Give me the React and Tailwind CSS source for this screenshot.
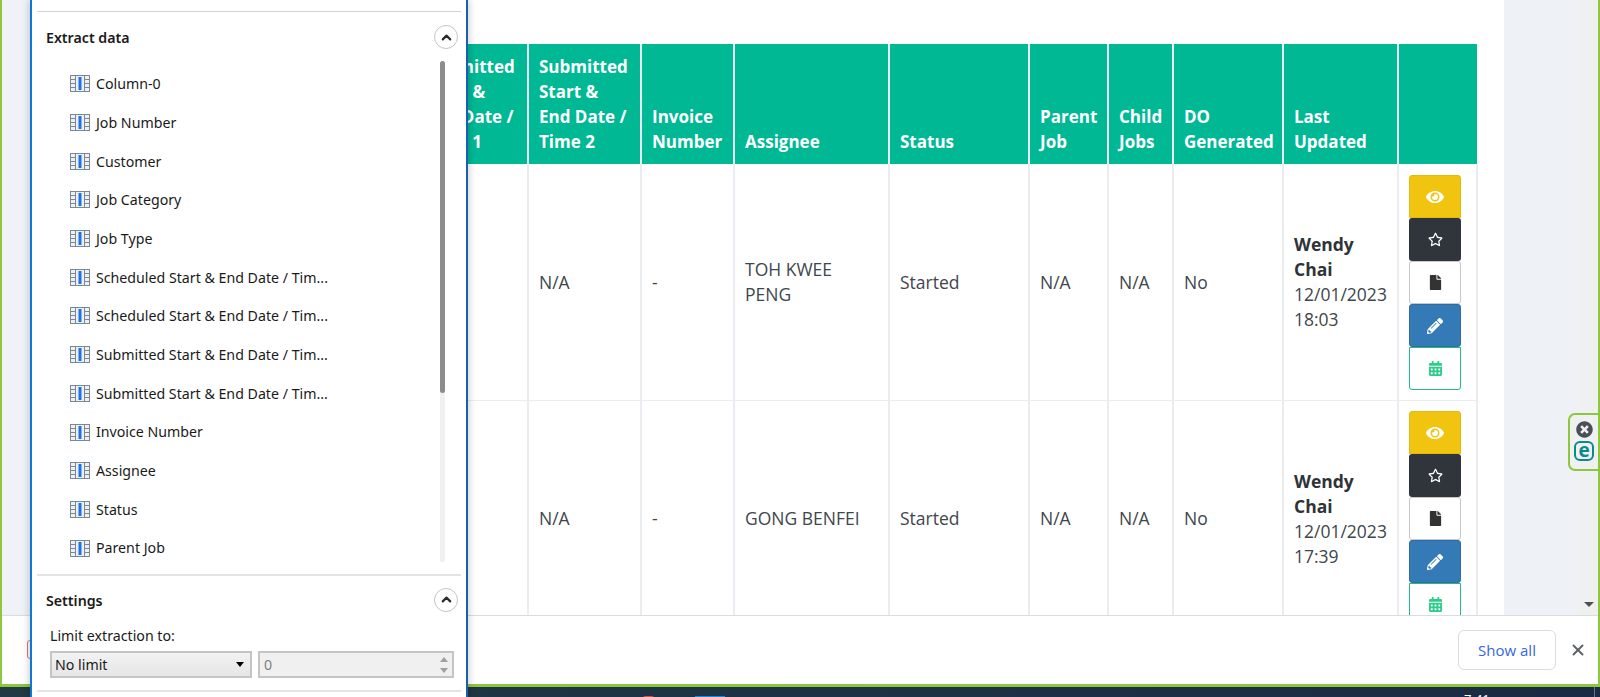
import React from "react";
import { ChevronUp, X } from "lucide-react";
import { FaEye, FaRegStar, FaFile, FaPencilAlt, FaCalendarAlt, FaTimesCircle } from "react-icons/fa";

const fields = [
  "Column-0",
  "Job Number",
  "Customer",
  "Job Category",
  "Job Type",
  "Scheduled Start & End Date / Tim...",
  "Scheduled Start & End Date / Tim...",
  "Submitted Start & End Date / Tim...",
  "Submitted Start & End Date / Tim...",
  "Invoice Number",
  "Assignee",
  "Status",
  "Parent Job",
];

const columns = [
  { label: "Submitted Start & End Date / Time 1", width: "w-[112px]" },
  { label: "Submitted Start & End Date / Time 2", width: "w-[113px]" },
  { label: "Invoice Number", width: "w-[93px]" },
  { label: "Assignee", width: "w-[155px]" },
  { label: "Status", width: "w-[140px]" },
  { label: "Parent Job", width: "w-[79px]" },
  { label: "Child Jobs", width: "w-[65px]" },
  { label: "DO Generated", width: "w-[110px]" },
  { label: "Last Updated", width: "w-[115px]" },
  { label: "", width: "w-[79px]" },
];

const rows = [
  { assignee: "TOH KWEE PENG", time: "18:03", pad: "pt-[11px] pb-[10px]" },
  { assignee: "GONG BENFEI", time: "17:39", pad: "py-[10px]" },
];

// little table-with-highlighted-column icon from the scraper panel
const ColumnIcon = () => (
  <svg width="20" height="17" viewBox="0 0 20 17" className="shrink-0">
    <rect x="0" y="0" width="20" height="17" fill="#7d8791" />
    {[1, 5, 9, 13].map((y) => (
      <React.Fragment key={y}>
        <rect x="1" y={y} width="4" height="3" fill="#eef1f4" />
        <rect x="15" y={y} width="4" height="3" fill="#eef1f4" />
      </React.Fragment>
    ))}
    <rect x="6" y="1" width="8" height="15" fill="#eef1f4" />
    <rect x="8.5" y="2" width="3" height="13" fill="#1a73e8" />
  </svg>
);

const CollapseButton = () => (
  <button className="w-[24px] h-[24px] rounded-full border border-[#c4c4c4] bg-white flex items-center justify-center">
    <ChevronUp size={15} strokeWidth={3.4} color="#2a2a2a" />
  </button>
);

const ActionButtons = () => (
  <div className="flex flex-col w-[52px]">
    <button className="h-[43px] flex items-center justify-center rounded-t-[3px] bg-[#f1c40f] border border-[#e5b90c] text-white">
      <FaEye size={18} />
    </button>
    <button className="h-[43px] flex items-center justify-center rounded-[3px] bg-[#30343b] text-white">
      <FaRegStar size={15} />
    </button>
    <button className="h-[43px] flex items-center justify-center rounded-[3px] bg-white border border-[#c8c8c8] text-[#333333]">
      <FaFile size={15} />
    </button>
    <button className="h-[43px] flex items-center justify-center rounded-[3px] bg-[#337ab7] border border-[#2e6da4] text-white">
      <FaPencilAlt size={16} />
    </button>
    <button className="h-[43px] flex items-center justify-center rounded-b-[3px] bg-white border border-[#26b97f] text-[#2ecc8a]">
      <FaCalendarAlt size={15} />
    </button>
  </div>
);

const DataTable = () => (
  <table className="table-fixed border-collapse w-[1061px] font-['Open_Sans',sans-serif] text-[17.5px] leading-[25px] text-[#40464c]">
    <thead>
      <tr className="h-[120px] bg-[#00b894] text-white text-[17px]">
        {columns.map((col, i) => (
          <th
            key={i}
            className={`${col.width} border-x-2 border-[#e9edf2] first:border-l-0 last:border-r-0 px-[10px] pb-[10px] align-bottom text-left font-bold`}
          >
            {col.label}
          </th>
        ))}
      </tr>
    </thead>
    <tbody>
      {rows.map((row) => (
        <tr key={row.time} className="h-[236px] border-b border-[#e9edf2]">
          <td className="border-x-2 border-[#e9edf2] px-[10px]"></td>
          <td className="border-x-2 border-[#e9edf2] px-[10px]">N/A</td>
          <td className="border-x-2 border-[#e9edf2] px-[10px]">-</td>
          <td className="border-x-2 border-[#e9edf2] px-[10px]">
            <div className="max-w-[125px]">{row.assignee}</div>
          </td>
          <td className="border-x-2 border-[#e9edf2] px-[10px]">Started</td>
          <td className="border-x-2 border-[#e9edf2] px-[10px]">N/A</td>
          <td className="border-x-2 border-[#e9edf2] px-[10px]">N/A</td>
          <td className="border-x-2 border-[#e9edf2] px-[10px]">No</td>
          <td className="border-x-2 border-[#e9edf2] px-[10px]">
            <div className="font-bold text-[#2f3337]">Wendy Chai</div>
            <div>12/01/2023 {row.time}</div>
          </td>
          <td className={`border-x-2 border-[#e9edf2] pl-[10px] ${row.pad} align-top`}>
            <ActionButtons />
          </td>
        </tr>
      ))}
    </tbody>
  </table>
);

const ScraperPanel = () => (
  <aside className="absolute left-[30px] top-0 bottom-0 w-[438px] bg-white border-l-2 border-r-[2px] border-l-[#0f78d4] border-r-[#1a5fb4] shadow-[0_0_8px_rgba(0,0,0,0.25)] font-['Noto_Sans',sans-serif] text-[14.2px] text-[#1a1a1a]">
    <div className="mx-[5px] mt-[11px] border-t border-[#d2d2d2]"></div>
    <div className="flex items-center justify-between pl-[14px] pr-[8px] pt-[13px] h-[37px]">
      <span className="font-semibold pt-[2px]">Extract data</span>
      <CollapseButton />
    </div>
    <div className="relative h-[501px] mt-[12px]">
      <ul className="pl-[38px] pt-[3.5px]">
        {fields.map((f, i) => (
          <li key={i} className="h-[38.7px] flex items-center gap-[6px] whitespace-nowrap">
            <ColumnIcon />
            <span>{f}</span>
          </li>
        ))}
      </ul>
      <div className="absolute right-[21px] top-0 bottom-0 w-[5px] rounded bg-[#f0f0f0]">
        <div className="h-[332px] rounded bg-[#8c8c8c]"></div>
      </div>
    </div>
    <div className="mx-[5px] mt-[12px] border-t-2 border-[#e3e3e3]"></div>
    <div className="flex items-center justify-between pl-[14px] pr-[8px] h-[47px]">
      <span className="font-semibold pt-[2px]">Settings</span>
      <CollapseButton />
    </div>
    <div className="pl-[18px] pr-[12px]">
      <div className="h-[28px] leading-[26px]">Limit extraction to:</div>
      <div className="flex gap-[6px] h-[27px]">
        <div className="w-[202px] flex items-center justify-between pl-[3px] pr-[6px] border-2 border-[#c4c4c4] bg-gradient-to-b from-[#f2f2f2] to-[#e6e6e6]">
          <span>No limit</span>
          <span className="w-0 h-0 border-x-[4px] border-x-transparent border-t-[5px] border-t-black"></span>
        </div>
        <div className="w-[196px] flex items-center justify-between pl-[4px] pr-[4px] border-2 border-[#c4c4c4] bg-[#f0f0f0] text-[#808080]">
          <span>0</span>
          <span className="flex flex-col gap-[6px]">
            <span className="block w-0 h-0 border-x-[4px] border-x-transparent border-b-[5px] border-b-[#a0a0a0]"></span>
            <span className="block w-0 h-0 border-x-[4px] border-x-transparent border-t-[5px] border-t-[#a0a0a0]"></span>
          </span>
        </div>
      </div>
    </div>
    <div className="mx-[5px] mt-[12px] border-t-2 border-[#e3e3e3]"></div>
  </aside>
);

const EsetWidget = () => (
  <div className="absolute right-[2px] top-[413px] w-[30px] h-[58px] bg-[#eff0f0] border-2 border-r-0 border-[#8dc63f] rounded-l-[7px] flex flex-col items-center gap-[3px] pt-[6px]">
    <FaTimesCircle size={17} color="#4a4f57" />
    <span className="w-[20px] h-[20px] rounded-[6px] border-2 border-[#0a8a8f] text-[#0a8a8f] font-['Open_Sans',sans-serif] font-bold text-[19px] leading-[14px] text-center">e</span>
  </div>
);

export default function App() {
  return (
    <div className="relative w-[1600px] h-[697px] overflow-hidden bg-gradient-to-r from-[#213a44] to-[#1a2a44] flex flex-col">
      <div className="h-[687px] flex flex-col border-x-2 border-b-[3px] border-[#8dc63f] bg-white">
        <div className="relative h-[615px] flex overflow-hidden">
          <div className="w-[28px] shrink-0 bg-[#eff3f8]"></div>
          <main className="w-[1474px] shrink-0 bg-white flex justify-end pt-[44px] pr-[26px] overflow-hidden">
            <div className="shrink-0">
              <DataTable />
            </div>
          </main>
          <div className="w-[74px] shrink-0 bg-[#eef1f6]"></div>
          <div className="relative flex-1 bg-[#eff0f0]">
            <span className="absolute left-[6px] bottom-[8px] w-0 h-0 border-x-[5px] border-x-transparent border-t-[5px] border-t-[#505050]"></span>
          </div>
        </div>
        <div className="flex-1 border-t border-[#dcdcdc] bg-white flex items-center justify-end pr-[11px] gap-[13px]">
          <button className="w-[98px] h-[40px] rounded-[6px] border border-[#dadce0] bg-white text-[#3367e0] font-['Open_Sans',sans-serif] text-[15px]">
            Show all
          </button>
          <X size={18} strokeWidth={2.6} color="#5f6368" />
        </div>
      </div>
      <div className="absolute left-[27px] top-[640px] w-[6px] h-[19px] rounded-[3px] border border-[#e57373]"></div>
      <ScraperPanel />
      <EsetWidget />
      <div className="flex-1 relative font-['Noto_Sans',sans-serif] text-[13px] text-white">
        <span className="absolute left-[642px] top-[9px] w-[13px] h-[4px] rounded-t-full bg-[#e0523a]"></span>
        <span className="absolute left-[695px] top-[9px] w-[30px] h-[2px] bg-[#1a86e0]"></span>
        <span className="absolute left-[1464px] top-[4px] leading-[16px]">7:41</span>
        <span className="absolute left-[1594px] top-0 bottom-0 w-px bg-[#6b7280]"></span>
      </div>
    </div>
  );
}
